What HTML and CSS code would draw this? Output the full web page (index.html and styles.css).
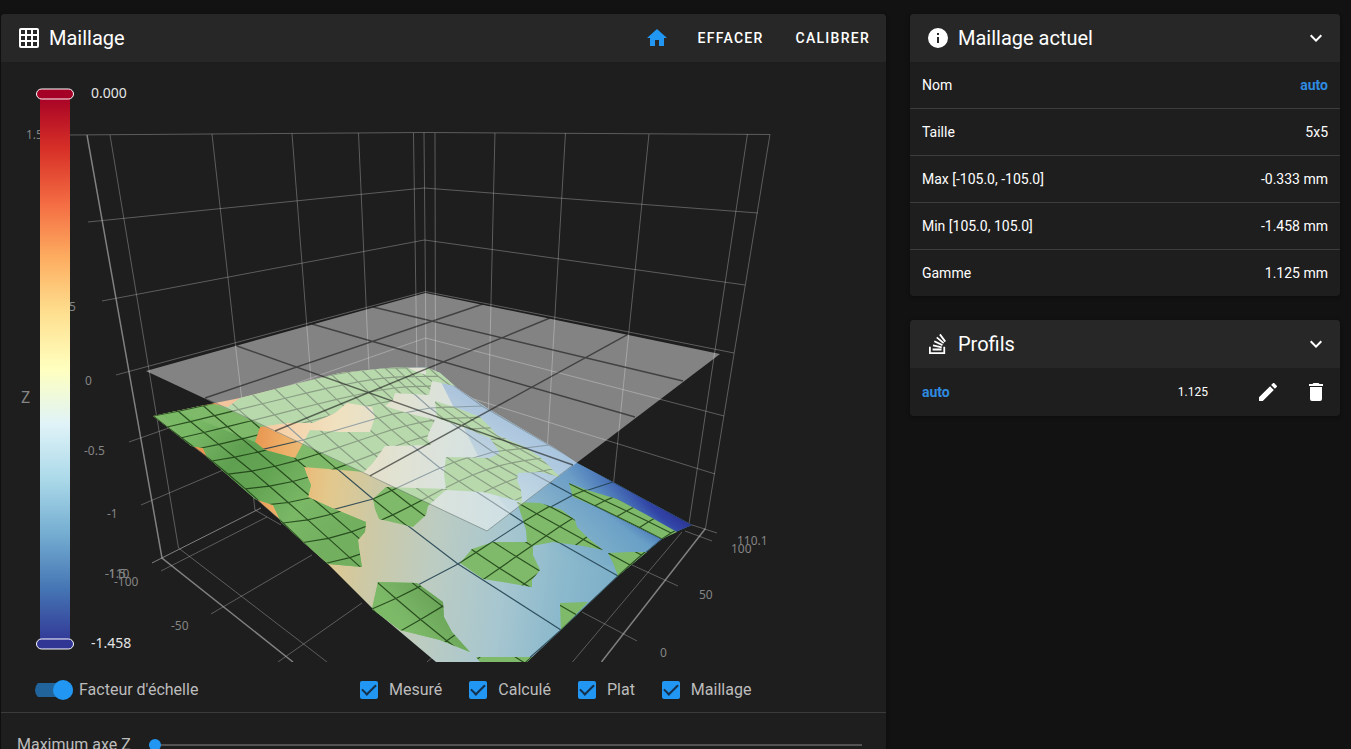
FILE: index.html
```
<!DOCTYPE html>
<html lang="fr">
<head>
<meta charset="utf-8">
<title>Maillage</title>
<link rel="stylesheet" href="styles.css">
</head>
<body>
<main class="page">
  <section class="card">
    <header class="card-header">
      <svg class="icon" viewBox="0 0 24 24" aria-hidden="true"><path d="M10,4V8H14V4H10M16,4V8H20V4H16M16,10V14H20V10H16M16,16V20H20V16H16M14,20V16H10V20H14M8,20V16H4V20H8M8,14V10H4V14H8M8,8V4H4V8H8M10,14H14V10H10V14M4,2H20A2,2 0 0,1 22,4V20A2,2 0 0,1 20,22H4C2.92,22 2,21.1 2,20V4A2,2 0 0,1 4,2Z"/></svg>
      <h2 class="card-title">Maillage</h2>
      <div class="actions">
        <button class="icon-button home" type="button" aria-label="Home"><svg class="icon" viewBox="0 0 24 24"><path d="M10,20V14H14V20H19V12H22L12,3L2,12H5V20H10Z"/></svg></button>
        <button class="text-button" type="button">EFFACER</button>
        <button class="text-button" type="button">CALIBRER</button>
      </div>
    </header>

    <svg class="chart" viewBox="1 62 885 600" role="img" aria-label="Maillage 3D">
      <defs>
        <linearGradient id="scale" x1="0" y1="0" x2="0" y2="1">
          <stop offset="0" stop-color="#a50026"/><stop offset=".1" stop-color="#d73027"/><stop offset=".2" stop-color="#f46d43"/><stop offset=".3" stop-color="#fdae61"/><stop offset=".4" stop-color="#fee090"/><stop offset=".5" stop-color="#ffffbf"/><stop offset=".6" stop-color="#e0f3f8"/><stop offset=".7" stop-color="#abd9e9"/><stop offset=".8" stop-color="#74add1"/><stop offset=".9" stop-color="#4575b4"/><stop offset="1" stop-color="#313695"/>
        </linearGradient>
        <linearGradient id="measured" gradientUnits="userSpaceOnUse" x1="250" y1="470" x2="650" y2="520">
          <stop offset="0" stop-color="#e89550"/><stop offset=".08" stop-color="#eeb068"/><stop offset=".2" stop-color="#e3c88c"/><stop offset=".32" stop-color="#ccc9a6"/><stop offset=".48" stop-color="#bcccc2"/><stop offset=".66" stop-color="#a6c6d0"/><stop offset=".8" stop-color="#8cb9cc"/><stop offset="1" stop-color="#74aac8"/>
        </linearGradient>
        <linearGradient id="ridge" gradientUnits="userSpaceOnUse" x1="550" y1="550" x2="595" y2="460">
          <stop offset="0" stop-color="#5b94c4" stop-opacity="0"/><stop offset="1" stop-color="#4c82c0" stop-opacity=".75"/>
        </linearGradient>
        <radialGradient id="deep" gradientUnits="userSpaceOnUse" cx="0" cy="0" r="1" gradientTransform="translate(690 518) rotate(31) scale(150 46)">
          <stop offset="0" stop-color="#2b2d92"/><stop offset=".35" stop-color="#2f41a5" stop-opacity=".95"/><stop offset="1" stop-color="#3c6ab4" stop-opacity="0"/>
        </radialGradient>
        <linearGradient id="green" gradientUnits="userSpaceOnUse" x1="190" y1="430" x2="330" y2="540">
          <stop offset="0" stop-color="#79b966"/><stop offset=".3" stop-color="#5f9f50"/><stop offset=".5" stop-color="#64a554"/><stop offset=".75" stop-color="#7ab866"/><stop offset="1" stop-color="#72b060"/>
        </linearGradient>
        <linearGradient id="greenNear" gradientUnits="userSpaceOnUse" x1="440" y1="585" x2="400" y2="620">
          <stop offset="0" stop-color="#659f55"/><stop offset="1" stop-color="#7dba68"/>
        </linearGradient>
        <clipPath id="greenClip">
          <path d="M153,416 200,406 213,404 228,407 240,398 287,386 340,373 387,368 406,367 417,372 426,375 426,367 440,373 455,386 432,381 429,395 412,394 395,393 393,400 385,406 407,413 435,420 430,430 427,438 431,445 385,446 373,463 364,472 341,470 304,467 308,478 311,485 308,497 332,508 366,522 365,532 358,540 359,548 362,567 328,564 302,541 281,522 273,505 255,499 207,457 203,448 191,446Z M260,427 255,442 265,450 295,458 302,445 310,430 340,432 370,432 375,417 372,407 347,403 335,413 313,423 287,423Z" clip-rule="evenodd"/>
          <path d="M446,457 490,458 500,453 490,438 463,427 437,418 435,401 457,408 480,417 490,427 497,435 523,446 540,457 560,477 540,472 518,473 517,480 521,490 522,502 483,492 446,490 444,473Z"/>
          <path d="M386,487 373,499 375,509 379,519 413,527 426,515 428,506 447,489Z"/>
          <path d="M517,502 540,503 562,510 575,520 577,527 587,537 603,550 583,546 553,542 532,546 527,542 526,530 523,520Z"/>
          <path d="M493,542 527,542 533,547 533,555 540,570 532,580 532,587 520,585 483,579 460,563 472,549Z"/>
          <path d="M569,483 587,490 617,499 647,515 677,532 662,539 627,522 597,507 573,497Z"/>
          <path d="M608,553 630,552 647,552 618,576 613,563Z"/>
          <path d="M560,603 588,602 561,630Z"/>
          <path d="M476,657 532,657 527,662 480,662Z"/>
          <path d="M378,582 417,583 443,602 444,617 452,632 470,652 440,640 400,630 372,609Z"/>
        </clipPath>
        <path id="surface" d="M153,416 200,406 240,398 287,386 340,373 387,368 426,367 440,373 457,388 487,408 553,447 577,463 613,482 640,497 692,525 673,533 662,539 618,576 561,630 527,662 436,662 373,609 328,564 302,541 280,520 255,498 207,457Z"/>
        <clipPath id="surfaceClip"><use href="#surface"/></clipPath>
      </defs>

      <g class="wall">
        <path d="M70,135 424,132.500 770,134.500"/>
        <path d="M88,222 424,188 758,213"/>
        <path d="M102,301 424.500,240 745,285"/>
        <path d="M116,375 425.500,291.500 734,353"/>
        <path d="M129,442 425.500,338 724,416"/>
        <path d="M141,505 425.500,384 715,474"/>
        <path d="M110,135 178.500,548"/>
        <path d="M212,134 236,350 255,510 281,525"/>
        <path d="M292,133.500 311,380"/>
        <path d="M358.500,133 369,370"/>
        <path d="M413.500,133 417,370"/>
        <path d="M424,132.500 425.500,292 426,370"/>
        <path d="M435,133 435.500,374"/>
        <path d="M495,133 488.500,410"/>
        <path d="M565.500,133 547.500,445"/>
        <path d="M649,134 613.500,484"/>
        <path d="M747.500,134 689,524"/>
        <path d="M770,134.500 705.500,528.500"/>
        <path d="M161,571 267,517"/>
        <path d="M211,614 312,555"/>
        <path d="M278,662 362,603"/>
        <path d="M427,662 433,657"/>
        <path d="M178.500,548 327,662"/>
        <path d="M692,525 717,533"/>
        <path d="M685,531 712,541"/>
        <path d="M632,565 678,586"/>
        <path d="M582,612 637,641"/>
        <path d="M682,532 572.500,662"/>
      </g>
      <g class="axis">
        <path d="M87,135 162,558 293,662"/>
        <path d="M705.500,528.500 601.500,662"/>
        <path class="dotted" d="M152,563 261,508"/>
      </g>

      <use href="#surface" fill="url(#measured)"/>
      <g clip-path="url(#surfaceClip)">
        <path fill="url(#ridge)" d="M430,360 720,520 660,560 560,570 500,500Z"/>
        <path fill="url(#deep)" d="M500,400H700V600H500Z"/>
        <path id="coarseMesh" class="coarse"/>
      </g>
      <g clip-path="url(#greenClip)">
        <path fill="#7eba69" d="M150,360H700V662H150Z"/>
        <path fill="url(#green)" d="M150,400 300,460 304,467 370,515V570H300Z"/>
        <path fill="url(#greenNear)" d="M370,575H475V660H370Z"/>
        <path id="fineMesh" class="fine"/>
      </g>

      <path class="plane" d="M146,371 425.500,293 720,354 487,531Z"/>
      <path class="plane-grid" d="M237,346 573,465M312,324 635,417M373,307 683,381M483,304 205,398M550,318 275,431M627,335 370,476"/>
      <path class="plane-edge" d="M205,398 487,531 573,465"/>

      <g class="labels">
        <text x="26" y="139">1.5</text>
        <text x="59" y="311">0.5</text>
        <text x="85" y="385">0</text>
        <text x="84" y="455">-0.5</text>
        <text x="107" y="518">-1</text>
        <text x="105" y="578">-1.5</text>
        <text x="105" y="578">-110</text>
        <text x="114" y="586">-100</text>
        <text x="171" y="630">-50</text>
        <text x="660" y="657">0</text>
        <text x="699" y="599">50</text>
        <text x="731" y="553">100</text>
        <text x="737" y="545">110.1</text>
        <text class="axis-name" x="21" y="403">Z</text>
      </g>

      <rect x="40" y="94" width="30" height="550" fill="url(#scale)"/>
      <rect class="handle" x="36.500" y="89" width="37" height="10" rx="5" fill="#a50026"/>
      <rect class="handle" x="36.500" y="639" width="37" height="10" rx="5" fill="#313695"/>
      <text class="scale-text" x="91" y="98">0.000</text>
      <text class="scale-text" x="91" y="648">-1.458</text>
    </svg>

    <div class="toggles">
      <label class="switch-label"><input class="switch" type="checkbox" role="switch" checked>Facteur d'échelle</label>
      <div class="checks">
        <label class="check-label"><input class="check" type="checkbox" checked>Mesuré</label>
        <label class="check-label"><input class="check" type="checkbox" checked>Calculé</label>
        <label class="check-label"><input class="check" type="checkbox" checked>Plat</label>
        <label class="check-label"><input class="check" type="checkbox" checked>Maillage</label>
      </div>
    </div>
    <div class="slider-row">
      <label for="zmax">Maximum axe Z</label>
      <input class="slider" id="zmax" type="range" min="0" max="100" value="0">
    </div>
  </section>

  <aside class="side">
    <section class="card">
      <header class="card-header">
        <svg class="icon" viewBox="0 0 24 24" aria-hidden="true"><path d="M13,9H11V7H13M13,17H11V11H13M12,2A10,10 0 0,0 2,12A10,10 0 0,0 12,22A10,10 0 0,0 22,12A10,10 0 0,0 12,2Z"/></svg>
        <h2 class="card-title">Maillage actuel</h2>
        <button class="icon-button collapse" type="button" aria-label="Réduire"><svg class="icon" viewBox="0 0 24 24"><path d="M7.41,8.58L12,13.17L16.59,8.58L18,10L12,16L6,10L7.41,8.58Z"/></svg></button>
      </header>
      <table class="facts">
        <tr><th scope="row">Nom</th><td class="name">auto</td></tr>
        <tr><th scope="row">Taille</th><td>5x5</td></tr>
        <tr><th scope="row">Max [-105.0, -105.0]</th><td>-0.333 mm</td></tr>
        <tr><th scope="row">Min [105.0, 105.0]</th><td>-1.458 mm</td></tr>
        <tr><th scope="row">Gamme</th><td>1.125 mm</td></tr>
      </table>
    </section>

    <section class="card">
      <header class="card-header">
        <svg class="icon" viewBox="0 0 24 24" aria-hidden="true"><path d="M17.36,20.2V14.82H19.15V22H3V14.82H4.8V20.2H17.36M6.77,14.32L7.14,12.56L15.93,14.41L15.56,16.17L6.77,14.32M7.93,10.11L8.69,8.5L16.83,12.28L16.07,13.9L7.93,10.11M10.19,6.12L11.34,4.74L18.24,10.5L17.09,11.87L10.19,6.12M14.64,1.87L20,9.08L18.56,10.15L13.2,2.94L14.64,1.87M6.59,18.41V16.61H15.57V18.41H6.59Z"/></svg>
        <h2 class="card-title">Profils</h2>
        <button class="icon-button collapse" type="button" aria-label="Réduire"><svg class="icon" viewBox="0 0 24 24"><path d="M7.41,8.58L12,13.17L16.59,8.58L18,10L12,16L6,10L7.41,8.58Z"/></svg></button>
      </header>
      <div class="profile">
        <span class="name">auto</span>
        <span class="profile-range">1.125</span>
        <div class="profile-actions">
          <button class="icon-button" type="button" aria-label="Modifier"><svg class="icon" viewBox="0 0 24 24"><path d="M20.71,7.04C21.1,6.65 21.1,6 20.71,5.63L18.37,3.29C18,2.9 17.35,2.9 16.96,3.29L15.12,5.12L18.87,8.87M3,17.25V21H6.75L17.81,9.93L14.06,6.18L3,17.25Z"/></svg></button>
          <button class="icon-button" type="button" aria-label="Supprimer"><svg class="icon" viewBox="0 0 24 24"><path d="M19,4H15.5L14.5,3H9.5L8.5,4H5V6H19M6,19A2,2 0 0,0 8,21H16A2,2 0 0,0 18,19V7H6V19Z"/></svg></button>
        </div>
      </div>
    </section>
  </aside>
</main>
<script src="mesh.js"></script>
</body>
</html>
```
FILE: styles.css
```
* { box-sizing: border-box; }

body {
  margin: 0;
  background: #121212;
  color: #fff;
  font-family: Roboto, "Liberation Sans", sans-serif;
  font-size: 14px;
}

button { padding: 0; border: 0; background: none; color: inherit; font: inherit; cursor: pointer; }
input { margin: 0; }

.page {
  display: grid;
  grid-template-columns: minmax(0, 2.058fr) minmax(0, 1fr);
  gap: 24px;
  align-items: start;
  height: 100vh;
  padding: 14px 11px 0 1px;
  overflow-y: auto;
  scrollbar-width: none;
}

.side { display: grid; gap: 24px; }

.card {
  overflow: hidden;
  border-radius: 4px;
  background: #1e1e1e;
  box-shadow: 0 1px 4px rgba(0, 0, 0, .4);
}

.card-header {
  display: flex;
  align-items: center;
  height: 48px;
  padding: 0 0 0 16px;
  background: #272727;
}

.card-title { margin: 0 0 0 8px; font-size: 20px; font-weight: 400; line-height: 32px; }

.icon { display: block; width: 24px; height: 24px; fill: currentColor; }
.icon-button { width: 24px; height: 24px; }
.collapse { margin: 0 12px 0 auto; }

.actions { display: flex; align-items: center; margin-left: auto; }
.home { margin-right: 13px; color: #2196f3; }
.text-button { height: 36px; padding: 0 16px; font-weight: 500; letter-spacing: .09em; }

.chart { display: block; width: 100%; height: auto; }
.wall path { fill: none; stroke: #bdbdbd; stroke-opacity: .4; }
.axis path { fill: none; stroke: #aaa; stroke-opacity: .7; stroke-width: 1.5; }
.axis .dotted { stroke-width: 1; }
.coarse { fill: none; stroke: #1d3d4c; stroke-opacity: .85; stroke-width: 1.2; }
.fine { fill: none; stroke: #1c3d14; stroke-opacity: .85; stroke-width: 1.2; }
.plane { fill: #fff; fill-opacity: .45; }
.plane-grid { fill: none; stroke: #161616; stroke-opacity: .6; stroke-width: 1.4; }
.plane-edge { fill: none; stroke: #33443a; stroke-opacity: .4; }
.labels { fill: #858585; font: 12px "Noto Sans", sans-serif; }
.labels .axis-name { font-size: 16px; }
.handle { stroke: #fff; }
.scale-text { fill: #e4e4e4; font: 14px "Noto Sans", sans-serif; }

.toggles {
  display: grid;
  grid-template-columns: 38.2% 1fr;
  align-items: center;
  height: 51px;
  padding: 6px 0 0 34px;
  border-bottom: 1px solid #3b3b3b;
  color: #bcbcbc;
  font-size: 16px;
}

.switch-label, .check-label { display: flex; align-items: center; line-height: 24px; white-space: nowrap; }
.switch-label { gap: 6px; }
.check-label { gap: 11px; }
.checks { display: flex; gap: 27px; }

.switch {
  display: grid;
  align-items: center;
  justify-items: end;
  width: 38px;
  height: 20px;
  appearance: none;
  border-radius: 10px;
  background: linear-gradient(#21649c, #21649c) center / 100% 14px no-repeat;
}
.switch::before { content: ""; width: 20px; height: 20px; border-radius: 50%; background: #2196f3; }

.check {
  display: grid;
  place-items: center;
  width: 18px;
  height: 18px;
  appearance: none;
  border-radius: 2px;
  background: #2196f3;
}
.check::before {
  content: "";
  width: 12px;
  height: 6px;
  margin-bottom: 4px;
  border: solid #14304a;
  border-width: 0 0 2px 2px;
  transform: rotate(-45deg);
}

.slider-row {
  display: flex;
  align-items: center;
  gap: 18px;
  height: 64px;
  padding: 0 24px 0 16px;
  color: #bcbcbc;
  font-size: 16px;
}

.slider { flex: 1; min-width: 0; height: 12px; appearance: none; background: linear-gradient(#535353, #535353) center / 100% 2px no-repeat; }
.slider::-webkit-slider-thumb { width: 12px; height: 12px; appearance: none; border-radius: 50%; background: #2196f3; }

.facts { width: 100%; border-collapse: separate; border-spacing: 0; }
.facts th, .facts td { height: 47px; padding: 0 12px; border-bottom: 1px solid #3d3d3d; font-weight: 400; text-align: left; }
.facts td { text-align: right; }
.facts tr:last-child th, .facts tr:last-child td { height: 46px; border-bottom: 0; }
.name, .facts .name { color: #2f8be0; font-weight: 700; }

.profile { display: flex; align-items: center; height: 48px; padding: 0 12px; }
.profile-range { margin: 0 48px 0 auto; font-size: 12px; }
.profile-actions { display: flex; gap: 24px; }
```
FILE: mesh.js
```
// Screen positions of the 5x5 probed points.
const nodes = [
  [[153, 416], [252, 394], [332, 375], [385, 368], [428, 367]],
  [[212, 461], [303, 440], [378, 418], [430, 408], [482, 406]],
  [[283, 523], [373, 499], [440, 468], [493, 452], [549, 445]],
  [[372, 609], [458, 564], [523, 522], [573, 495], [613, 482]],
  [[481, 701], [561, 630], [618, 576], [662, 539], [692, 525]]
];

// Lagrange weights of the five nodes at parameter t (0 to 4).
function weights(t) {
  return [0, 1, 2, 3, 4].map(i =>
    [0, 1, 2, 3, 4].reduce((w, k) => k === i ? w : w * (t - k) / (i - k), 1));
}

function point(u, v) {
  const wu = weights(u), wv = weights(v);
  let x = 0, y = 0;
  nodes.forEach((row, i) => row.forEach((p, j) => {
    x += wu[i] * wv[j] * p[0];
    y += wu[i] * wv[j] * p[1];
  }));
  return x.toFixed(1) + "," + y.toFixed(1);
}

// Mesh lines every `step`, each drawn through points `detail` apart.
function mesh(step, detail) {
  let d = "";
  for (let u = 0; u <= 4; u += step) {
    const across = [], down = [];
    for (let v = 0; v <= 4; v += detail) {
      across.push(point(u, v));
      down.push(point(v, u));
    }
    d += "M" + across.join(" ") + "M" + down.join(" ");
  }
  return d;
}

document.getElementById("coarseMesh").setAttribute("d", mesh(1, 1));
document.getElementById("fineMesh").setAttribute("d", mesh(0.25, 0.25));
```
